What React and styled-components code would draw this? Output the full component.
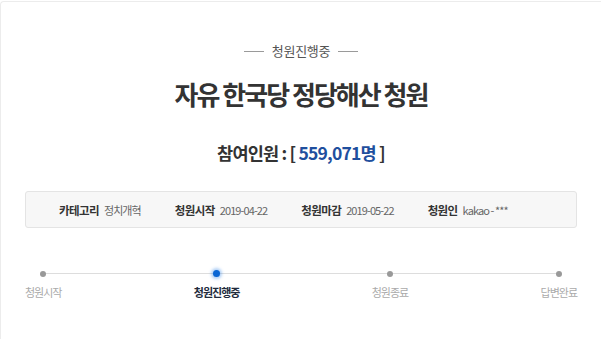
import React from "react";
import styled, {createGlobalStyle} from "styled-components";

const GlobalStyle = createGlobalStyle`
  html, body {
    margin: 0;
    padding: 0;
    background: #fff;
    overflow: hidden;
  }
  body {
    font-family: "Noto Sans CJK KR", "Noto Sans", sans-serif;
    color: #333;
  }
`;

const Frame = styled.div`
  box-sizing: border-box;
  margin: 1px 0 0 0;
  width: 100%;
  height: 338px;
  border: 1px solid #ececec;
  border-right: none;
  border-bottom: none;
  border-top-left-radius: 4px;
`;

const Content = styled.div`
  width: 552px;
  margin: 0 auto;
  padding-top: 38px;
  display: flex;
  flex-direction: column;
  align-items: center;
`;

const StatusTag = styled.div`
  display: flex;
  align-items: center;
  gap: 8px;
  font-size: 13px;
  line-height: 22px;
  color: #555;
  letter-spacing: -0.3px;

  &::before, &::after {
    content: "";
    width: 20px;
    height: 1px;
    background: #9a9a9a;
  }
`;

const Title = styled.h1`
  margin: 12px 0 0;
  font-size: 26px;
  line-height: 40px;
  font-weight: 700;
  color: #333;
  letter-spacing: -2px;
`;

const Count = styled.div`
  margin-top: 26px;
  font-size: 17.5px;
  line-height: 26px;
  font-weight: 700;
  color: #333;
  letter-spacing: -0.8px;
`;

const Number = styled.span`
  color: #1f4f9e;
`;

const InfoBox = styled.div`
  box-sizing: border-box;
  margin-top: 25px;
  width: 100%;
  height: 37px;
  background: #f7f7f7;
  border: 1px solid #e4e4e4;
  border-radius: 3px;
  display: flex;
  align-items: center;
  padding-left: 33px;
  gap: 34px;
`;

const InfoItem = styled.div`
  display: flex;
  align-items: center;
  gap: 5px;
  font-size: 11.5px;
  letter-spacing: -0.6px;
`;

const Label = styled.span`
  font-weight: 700;
  color: #333;
`;

const Value = styled.span`
  font-size: 11px;
  letter-spacing: -0.9px;
  color: #666;
`;

const Steps = styled.div`
  position: relative;
  margin-top: 40px;
  width: 100%;
  display: flex;
  justify-content: space-between;

  &::before {
    content: "";
    position: absolute;
    left: 17px;
    right: 17px;
    top: 5px;
    height: 1px;
    background: #ddd;
  }
`;

const Step = styled.div`
  position: relative;
  display: flex;
  flex-direction: column;
  align-items: center;
  gap: 7px;
`;

const Dot = styled.span`
  width: ${p => (p.$active ? 7 : 6)}px;
  height: ${p => (p.$active ? 7 : 6)}px;
  margin-top: ${p => (p.$active ? 2 : 2.5)}px;
  border-radius: 50%;
  background: ${p => (p.$active ? "#0a66d4" : "#999")};
  box-shadow: ${p => (p.$active ? "0 0 3px 2px rgba(30, 120, 230, 0.35)" : "none")};
`;

const StepLabel = styled.span`
  font-size: 11px;
  line-height: 16px;
  letter-spacing: -1px;
  color: ${p => (p.$active ? "#222b3c" : "#aaa")};
  font-weight: ${p => (p.$active ? 700 : 400)};
`;

const info = [
    {label: "카테고리", value: "정치개혁"},
    {label: "청원시작", value: "2019-04-22"},
    {label: "청원마감", value: "2019-05-22"},
    {label: "청원인", value: "kakao - ***"}
];

const steps = ["청원시작", "청원진행중", "청원종료", "답변완료"];

export default function App() {
    return (
        <>
            <GlobalStyle/>
            <Frame>
                <Content>
                    <StatusTag>청원진행중</StatusTag>
                    <Title>자유 한국당 정당해산 청원</Title>
                    <Count>참여인원 : [ <Number>559,071명</Number> ]</Count>
                    <InfoBox>
                        {info.map((item, key) => (
                            <InfoItem key={key}>
                                <Label>{item.label}</Label>
                                <Value>{item.value}</Value>
                            </InfoItem>
                        ))}
                    </InfoBox>
                    <Steps>
                        {steps.map((name, key) => (
                            <Step key={key}>
                                <Dot $active={key === 1}/>
                                <StepLabel $active={key === 1}>{name}</StepLabel>
                            </Step>
                        ))}
                    </Steps>
                </Content>
            </Frame>
        </>
    );
}
